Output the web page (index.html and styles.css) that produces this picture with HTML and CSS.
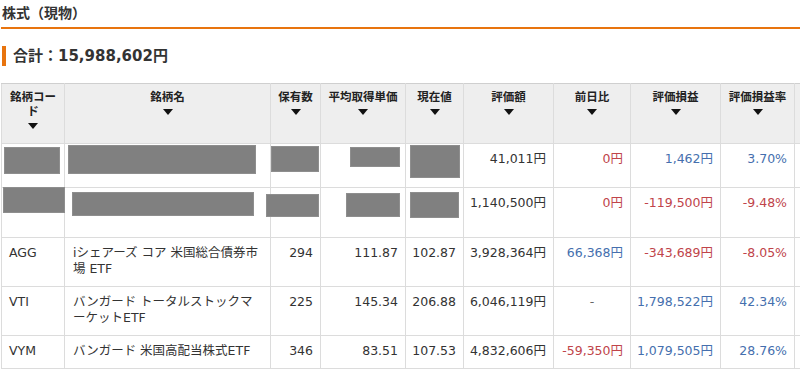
FILE: index.html
```html
<!DOCTYPE html>
<html lang="ja">
<head>
<meta charset="utf-8">
<title>株式（現物）</title>
<link rel="stylesheet" href="styles.css">
</head>
<body>
<div class="page">
  <h1 class="title">株式（現物）</h1>
  <p class="total">合計：15,988,602円</p>
  <div class="table-wrap">
    <table class="holdings">
      <colgroup>
        <col class="c-code"><col class="c-name"><col class="c-qty"><col class="c-avg"><col class="c-price"><col class="c-value"><col class="c-day"><col class="c-pl"><col class="c-rate"><col class="c-more">
      </colgroup>
      <thead>
        <tr>
          <th>銘柄コード<br><span class="sort"></span></th>
          <th>銘柄名<br><span class="sort"></span></th>
          <th>保有数<br><span class="sort"></span></th>
          <th>平均取得単価<br><span class="sort"></span></th>
          <th>現在値<br><span class="sort"></span></th>
          <th>評価額<br><span class="sort"></span></th>
          <th>前日比<br><span class="sort"></span></th>
          <th>評価損益<br><span class="sort"></span></th>
          <th>評価損益率<br><span class="sort"></span></th>
          <th></th>
        </tr>
      </thead>
      <tbody>
        <tr class="r1">
          <td></td><td></td><td class="num"></td><td class="num"></td><td class="num"></td>
          <td class="num">41,011円</td>
          <td class="num neg">0円</td>
          <td class="num pos">1,462円</td>
          <td class="num pos">3.70%</td>
          <td></td>
        </tr>
        <tr class="r2">
          <td></td><td></td><td class="num"></td><td class="num"></td><td class="num"></td>
          <td class="num">1,140,500円</td>
          <td class="num neg">0円</td>
          <td class="num neg">-119,500円</td>
          <td class="num neg">-9.48%</td>
          <td></td>
        </tr>
        <tr>
          <td>AGG</td>
          <td>iシェアーズ コア 米国総合債券市場 ETF</td>
          <td class="num">294</td>
          <td class="num">111.87</td>
          <td class="num">102.87</td>
          <td class="num">3,928,364円</td>
          <td class="num pos">66,368円</td>
          <td class="num neg">-343,689円</td>
          <td class="num neg">-8.05%</td>
          <td></td>
        </tr>
        <tr>
          <td>VTI</td>
          <td>バンガード トータルストックマーケットETF</td>
          <td class="num">225</td>
          <td class="num">145.34</td>
          <td class="num">206.88</td>
          <td class="num">6,046,119円</td>
          <td class="center">-</td>
          <td class="num pos">1,798,522円</td>
          <td class="num pos">42.34%</td>
          <td></td>
        </tr>
        <tr>
          <td>VYM</td>
          <td>バンガード 米国高配当株式ETF</td>
          <td class="num">346</td>
          <td class="num">83.51</td>
          <td class="num">107.53</td>
          <td class="num">4,832,606円</td>
          <td class="num neg">-59,350円</td>
          <td class="num pos">1,079,505円</td>
          <td class="num pos">28.76%</td>
          <td></td>
        </tr>
      </tbody>
    </table>
    <span class="mask m1a"></span>
    <span class="mask m1b"></span>
    <span class="mask m1c"></span>
    <span class="mask m1d"></span>
    <span class="mask m1e"></span>
    <span class="mask m2a"></span>
    <span class="mask m2b"></span>
    <span class="mask m2c"></span>
    <span class="mask m2d"></span>
    <span class="mask m2e"></span>
  </div>
</div>
</body>
</html>
```

FILE: styles.css
```css
html, body {
  margin: 0;
  padding: 0;
  overflow: hidden;
  background: #fff;
}
body {
  font-family: "DejaVu Sans", "Noto Sans CJK JP", sans-serif;
  color: #333;
}
.page {
  padding: 0 0 0 1px;
  width: 900px;
}
.title {
  margin: 0;
  width: 799px;
  font-size: 14px;
  font-weight: bold;
  line-height: 20px;
  padding: 3px 0 4px 1px;
  border-bottom: 2px solid #e8740e;
  color: #333;
}
.total {
  margin: 17px 0 0 1px;
  border-left: 4px solid #e8740e;
  padding-left: 7px;
  font-size: 15px;
  font-weight: bold;
  line-height: 20px;
  color: #333;
}
.table-wrap {
  position: relative;
  margin-top: 17px;
  margin-left: -1px;
  padding-left: 1px;
}
.holdings {
  border-collapse: collapse;
  table-layout: fixed;
  width: 873px;
  font-size: 12.5px;
  line-height: 16px;
}
.c-code { width: 63px; }
.c-name { width: 206px; }
.c-qty { width: 50px; }
.c-avg { width: 85px; }
.c-price { width: 58px; }
.c-value { width: 90px; }
.c-day { width: 77px; }
.c-pl { width: 90px; }
.c-rate { width: 74px; }
.c-more { width: 80px; }

.holdings th {
  background: #eeeeee;
  border: 1px solid #dcdcdc;
  border-top-color: #cfcfcf;
  font-size: 11.5px;
  font-weight: bold;
  line-height: 14px;
  color: #222;
  vertical-align: top;
  text-align: center;
  padding: 6px 4px 11px;
}
.sort {
  display: inline-block;
  width: 0;
  height: 0;
  border-left: 5px solid transparent;
  border-right: 5px solid transparent;
  border-top: 6px solid #111;
  vertical-align: middle;
}
.holdings td {
  border: 1px solid #dcdcdc;
  vertical-align: top;
  padding: 7px 7px 9px;
  color: #333;
  white-space: normal;
}
.holdings td:nth-child(2) {
  padding-left: 8px;
  padding-right: 8px;
}
.holdings td.num {
  text-align: right;
  padding-left: 2px;
  padding-right: 7px;
  white-space: nowrap;
}
.holdings td.center { text-align: center; color: #666; }
.holdings td.neg { color: #c0444a; }
.holdings td.pos { color: #456fae; }

tr.r1 { height: 44px; }
tr.r2 { height: 50px; }

.mask {
  position: absolute;
  background: #808080;
  border: 1px solid #8e8e8e;
  box-sizing: border-box;
}
.m1a { left: 4px; top: 64px; width: 56px; height: 27px; }
.m1b { left: 68px; top: 62px; width: 188px; height: 29px; }
.m1c { left: 271px; top: 63px; width: 48px; height: 26px; }
.m1d { left: 350px; top: 64px; width: 50px; height: 20px; }
.m1e { left: 410px; top: 62px; width: 50px; height: 33px; }
.m2a { left: 3px; top: 104px; width: 62px; height: 26px; }
.m2b { left: 72px; top: 109px; width: 182px; height: 24px; }
.m2c { left: 266px; top: 111px; width: 53px; height: 23px; }
.m2d { left: 346px; top: 110px; width: 54px; height: 24px; }
.m2e { left: 410px; top: 109px; width: 49px; height: 26px; }
```
